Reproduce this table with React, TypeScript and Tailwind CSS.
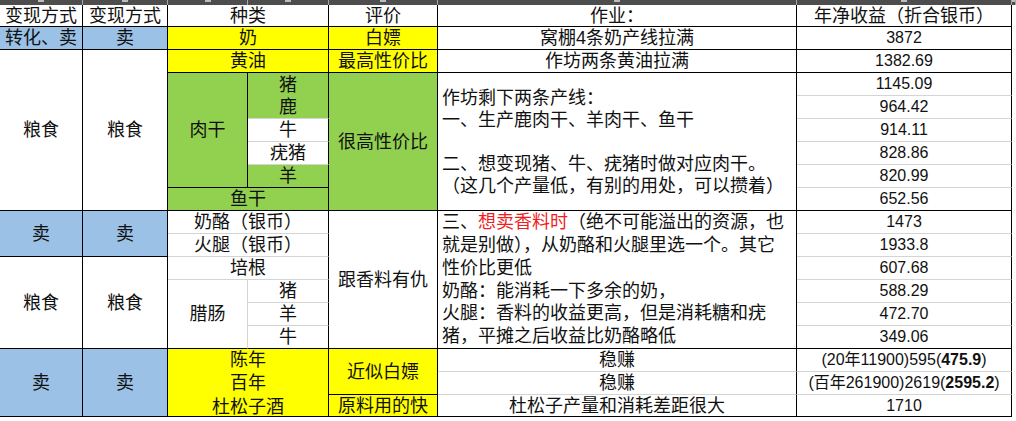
import type { ReactNode } from 'react';
import clsx from 'clsx';

type Edge = 'k' | 'g' | 'n';

const RIGHT: Record<Edge, string> = {
  k: 'border-r border-r-black',
  g: 'border-r border-r-[#d4d4d4]',
  n: '',
};

const BOTTOM: Record<Edge, string> = {
  k: 'border-b border-b-black',
  g: 'border-b border-b-[#d4d4d4]',
  n: '',
};

const BG = {
  blue: 'bg-[#9bc2e6]',
  yellow: 'bg-[#ffff00]',
  green: 'bg-[#92d050]',
  white: 'bg-white',
};

type CellProps = {
  pos: string;
  bg?: keyof typeof BG;
  r?: Edge;
  b?: Edge;
  num?: boolean;
  className?: string;
  children?: ReactNode;
};

const Cell = ({ pos, bg = 'white', r = 'k', b = 'k', num, className, children }: CellProps) => {
  return (
    <div
      className={clsx(
        'flex items-center justify-center overflow-hidden whitespace-nowrap leading-[22px]',
        num ? 'text-[16px]' : 'text-[18px]',
        BG[bg],
        RIGHT[r],
        BOTTOM[b],
        pos,
        className,
      )}
    >
      {children}
    </div>
  );
};

// column headers strip (bottom of excel's A, B, C... bar)
const barCols = [
  'col-start-1',
  'col-start-2',
  'col-start-3',
  'col-start-4',
  'col-start-5',
  'col-start-6',
  'col-start-7',
  'col-start-8',
];

const App = () => {
  return (
    <div className="w-[1016px] h-[421px] overflow-hidden bg-white text-[#111] font-['Liberation_Sans','Noto_Sans_CJK_SC',sans-serif]">
      <div className="grid grid-cols-[83px_85px_80px_81px_109px_359px_215px_4px] grid-rows-[5px_22px_repeat(16,23px)_22px]">
        {barCols.map(c => (
          <div key={c} className={clsx('row-start-1 bg-[#4d4d4d] border-r border-r-[#a6a6a6] flex justify-center', c)}>
            <div className="w-[6px] h-[2px] bg-[#bdbdbd]" />
          </div>
        ))}

        {/* header */}
        <Cell pos="col-start-1 row-start-2">变现方式</Cell>
        <Cell pos="col-start-2 row-start-2">变现方式</Cell>
        <Cell pos="col-start-3 col-span-2 row-start-2">种类</Cell>
        <Cell pos="col-start-5 row-start-2">评价</Cell>
        <Cell pos="col-start-6 row-start-2">作业：</Cell>
        <Cell pos="col-start-7 row-start-2">年净收益（折合银币）</Cell>

        {/* 奶 */}
        <Cell pos="col-start-1 row-start-3" bg="blue">转化、卖</Cell>
        <Cell pos="col-start-2 row-start-3" bg="blue">卖</Cell>
        <Cell pos="col-start-3 col-span-2 row-start-3" bg="yellow">奶</Cell>
        <Cell pos="col-start-5 row-start-3" bg="yellow">白嫖</Cell>
        <Cell pos="col-start-6 row-start-3">窝棚4条奶产线拉满</Cell>
        <Cell pos="col-start-7 row-start-3" num>3872</Cell>

        {/* 粮食 block */}
        <Cell pos="col-start-1 row-start-4 row-span-7">粮食</Cell>
        <Cell pos="col-start-2 row-start-4 row-span-7">粮食</Cell>
        <Cell pos="col-start-3 col-span-2 row-start-4" bg="yellow">黄油</Cell>
        <Cell pos="col-start-5 row-start-4" bg="yellow">最高性价比</Cell>
        <Cell pos="col-start-6 row-start-4">作坊两条黄油拉满</Cell>
        <Cell pos="col-start-7 row-start-4" num>1382.69</Cell>

        <Cell pos="col-start-3 row-start-5 row-span-5" bg="green">肉干</Cell>
        <Cell pos="col-start-4 row-start-5" bg="green" b="n">猪</Cell>
        <Cell pos="col-start-4 row-start-6" bg="green" b="g">鹿</Cell>
        <Cell pos="col-start-4 row-start-7" b="g">牛</Cell>
        <Cell pos="col-start-4 row-start-8" b="g">疣猪</Cell>
        <Cell pos="col-start-4 row-start-9" bg="green">羊</Cell>
        <Cell pos="col-start-3 col-span-2 row-start-10" bg="green">鱼干</Cell>

        <Cell pos="col-start-5 row-start-5 row-span-6" bg="green">很高性价比</Cell>
        <Cell pos="col-start-6 row-start-5 row-span-6" className="justify-start pl-[4px]">
          <div className="leading-[22px]">
            <div>作坊剩下两条产线：</div>
            <div>一、生产鹿肉干、羊肉干、鱼干</div>
            <div>&nbsp;</div>
            <div>二、想变现猪、牛、疣猪时做对应肉干。</div>
            <div>（这几个产量低，有别的用处，可以攒着）</div>
          </div>
        </Cell>
        <Cell pos="col-start-7 row-start-5" num b="g">1145.09</Cell>
        <Cell pos="col-start-7 row-start-6" num b="g">964.42</Cell>
        <Cell pos="col-start-7 row-start-7" num b="g">914.11</Cell>
        <Cell pos="col-start-7 row-start-8" num b="g">828.86</Cell>
        <Cell pos="col-start-7 row-start-9" num b="g">820.99</Cell>
        <Cell pos="col-start-7 row-start-10" num>652.56</Cell>

        {/* 奶酪 / 火腿 */}
        <Cell pos="col-start-1 row-start-11 row-span-2" bg="blue">卖</Cell>
        <Cell pos="col-start-2 row-start-11 row-span-2" bg="blue">卖</Cell>
        <Cell pos="col-start-3 col-span-2 row-start-11" b="g">奶酪（银币）</Cell>
        <Cell pos="col-start-3 col-span-2 row-start-12" b="g">火腿（银币）</Cell>

        <Cell pos="col-start-1 row-start-13 row-span-4">粮食</Cell>
        <Cell pos="col-start-2 row-start-13 row-span-4">粮食</Cell>
        <Cell pos="col-start-3 col-span-2 row-start-13" b="g">培根</Cell>
        <Cell pos="col-start-3 row-start-14 row-span-3" r="g">腊肠</Cell>
        <Cell pos="col-start-4 row-start-14" b="g">猪</Cell>
        <Cell pos="col-start-4 row-start-15" b="g">羊</Cell>
        <Cell pos="col-start-4 row-start-16">牛</Cell>

        <Cell pos="col-start-5 row-start-11 row-span-6">跟香料有仇</Cell>
        <Cell pos="col-start-6 row-start-11 row-span-6" className="justify-start pl-[4px]">
          <div className="leading-[22.7px]">
            <div>
              三、<span className="text-[#f01e1e]">想卖香料时</span>（绝不可能溢出的资源，也
            </div>
            <div>就是别做），从奶酪和火腿里选一个。其它</div>
            <div>性价比更低</div>
            <div>奶酪：能消耗一下多余的奶，</div>
            <div>火腿：香料的收益更高，但是消耗糖和疣</div>
            <div>猪，平摊之后收益比奶酪略低</div>
          </div>
        </Cell>
        <Cell pos="col-start-7 row-start-11" num b="g">1473</Cell>
        <Cell pos="col-start-7 row-start-12" num b="g">1933.8</Cell>
        <Cell pos="col-start-7 row-start-13" num b="g">607.68</Cell>
        <Cell pos="col-start-7 row-start-14" num b="g">588.29</Cell>
        <Cell pos="col-start-7 row-start-15" num b="g">472.70</Cell>
        <Cell pos="col-start-7 row-start-16" num>349.06</Cell>

        {/* 酒 */}
        <Cell pos="col-start-1 row-start-17 row-span-3" bg="blue">卖</Cell>
        <Cell pos="col-start-2 row-start-17 row-span-3" bg="blue">卖</Cell>
        <Cell pos="col-start-3 col-span-2 row-start-17 row-span-3" bg="yellow" className="flex-col">
          <div className="h-[23px] flex items-center">陈年</div>
          <div className="h-[23px] flex items-center">百年</div>
          <div className="h-[22px] flex items-center pt-[3px]">杜松子酒</div>
        </Cell>
        <Cell pos="col-start-5 row-start-17 row-span-2" bg="yellow">近似白嫖</Cell>
        <Cell pos="col-start-5 row-start-19" bg="yellow">原料用的快</Cell>
        <Cell pos="col-start-6 row-start-17" b="g">稳赚</Cell>
        <Cell pos="col-start-6 row-start-18" b="g">稳赚</Cell>
        <Cell pos="col-start-6 row-start-19">杜松子产量和消耗差距很大</Cell>
        <Cell pos="col-start-7 row-start-17" num b="g">
          <span>
            (20<span className="text-[16px]">年</span>11900)595(<b>475.9</b>)
          </span>
        </Cell>
        <Cell pos="col-start-7 row-start-18" num b="g">
          <span>
            (<span className="text-[16px]">百年</span>261900)2619(<b>2595.2</b>)
          </span>
        </Cell>
        <Cell pos="col-start-7 row-start-19" num>1710</Cell>
      </div>
    </div>
  );
};

export default App;
